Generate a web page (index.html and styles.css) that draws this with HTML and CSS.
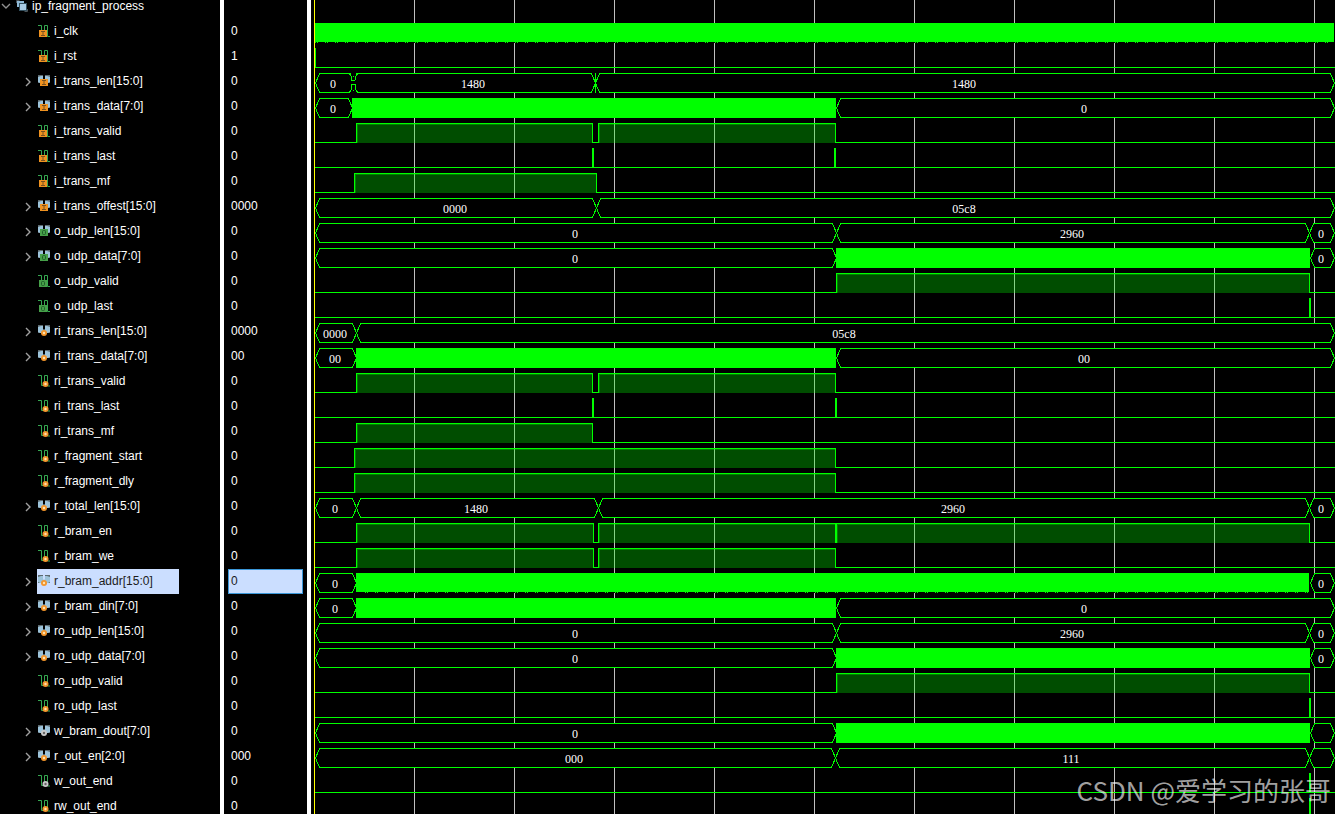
FILE: index.html
```html
<!DOCTYPE html>
<html lang="en">
<head>
<meta charset="utf-8">
<title>Waveform viewer</title>
<link rel="stylesheet" href="styles.css">
</head>
<body>
<svg class="symbols" aria-hidden="true">
  <defs>
    <symbol id="open" viewBox="0 0 10 10"><path d="M1 3l4 4 4-4" fill="none" stroke="#8f8f8f" stroke-width="1.4"/></symbol>
    <symbol id="closed" viewBox="0 0 10 10"><path d="M3 1l4 4-4 4" fill="none" stroke="#a0a0a0" stroke-width="1.4"/></symbol>
    <symbol id="scope" viewBox="0 0 12 12">
      <path d="M.5 3V.5h3M8.500 11.500h3V9" fill="none" stroke="#4b5257"/>
      <rect x="1" y="1" width="7" height="6" fill="#8fb9d6"/>
      <rect x="3.500" y="3.500" width="7" height="7" fill="#a9cbe4" stroke="#34505f"/>
    </symbol>
    <symbol id="pair" viewBox="0 0 12 12">
      <path d="M0 0h5v8H0zM7 0h5v8H7z" fill="#5d6a70"/>
      <path d="M0 2l3-1h2v3l1 1 1-1V1h2l3 1v5l-2 1H2L0 7z" fill="#9cc3da"/>
    </symbol>
    <symbol id="bit-in" viewBox="0 0 12 12">
      <path d="M0 .5h3.500V6M6.500 6V.5h3V11.500H12" fill="none" stroke="#35a850"/>
      <rect x="1" y="5" width="8" height="7" fill="#ef9220"/>
      <path d="M3 6.500h4M3 10.500h4M5 6.500v4" fill="none" stroke="#7a5220"/>
    </symbol>
    <symbol id="bit-out" viewBox="0 0 12 12">
      <path d="M0 .5h3.500V6M6.500 6V.5h3V11.500H12" fill="none" stroke="#35a850"/>
      <rect x="1" y="5" width="8" height="7" fill="#46a049"/>
      <rect x="3.500" y="6.500" width="3" height="4" rx="1" fill="none" stroke="#1f5c2a"/>
    </symbol>
    <symbol id="bit-reg" viewBox="0 0 12 12">
      <path d="M0 .5h3.500V10.500h3V.5h3V11H12" fill="none" stroke="#35a850"/>
      <circle cx="7.500" cy="9" r="3" fill="#f3952a"/><circle cx="7.500" cy="9" r="1.200" fill="#ffe2b0"/>
    </symbol>
    <symbol id="bit-wire" viewBox="0 0 12 12">
      <path d="M0 .5h3.500V10.500h3V.5h3V11H12" fill="none" stroke="#35a850"/>
      <circle cx="7.500" cy="9" r="3" fill="#c9c9c9"/><circle cx="7.500" cy="9" r="1.200" fill="#666"/>
    </symbol>
    <symbol id="bus-in" viewBox="0 0 12 12">
      <use href="#pair"/><rect x="2" y="4" width="8" height="7" fill="#ef9220"/>
      <path d="M4 5.500h4M4 9.500h4M6 5.500v4" fill="none" stroke="#7a5220"/>
    </symbol>
    <symbol id="bus-out" viewBox="0 0 12 12">
      <use href="#pair"/><rect x="2" y="4" width="8" height="7" fill="#46a049"/>
      <rect x="4.500" y="5.500" width="3" height="4" rx="1" fill="none" stroke="#1f5c2a"/>
    </symbol>
    <symbol id="bus-reg" viewBox="0 0 12 12">
      <use href="#pair"/><circle cx="6" cy="8" r="3" fill="#f3952a"/><circle cx="6" cy="8" r="1.200" fill="#ffe2b0"/>
    </symbol>
    <symbol id="bus-wire" viewBox="0 0 12 12">
      <use href="#pair"/><circle cx="6" cy="8" r="3" fill="#c9c9c9"/><circle cx="6" cy="8" r="1.200" fill="#666"/>
    </symbol>
  </defs>
</svg>
<main class="viewer">
  <ul class="names">
    <li class="scope"><button class="toggle" aria-label="Collapse ip_fragment_process"><svg><use href="#open"/></svg></button><svg class="icon"><use href="#scope"/></svg><span>ip_fragment_process</span></li>
    <li class="row"><span class="label"><svg class="icon"><use href="#bit-in"/></svg>i_clk</span></li>
    <li class="row"><span class="label"><svg class="icon"><use href="#bit-in"/></svg>i_rst</span></li>
    <li class="row"><button class="toggle" aria-label="Expand i_trans_len"><svg><use href="#closed"/></svg></button><span class="label"><svg class="icon"><use href="#bus-in"/></svg>i_trans_len[15:0]</span></li>
    <li class="row"><button class="toggle" aria-label="Expand i_trans_data"><svg><use href="#closed"/></svg></button><span class="label"><svg class="icon"><use href="#bus-in"/></svg>i_trans_data[7:0]</span></li>
    <li class="row"><span class="label"><svg class="icon"><use href="#bit-in"/></svg>i_trans_valid</span></li>
    <li class="row"><span class="label"><svg class="icon"><use href="#bit-in"/></svg>i_trans_last</span></li>
    <li class="row"><span class="label"><svg class="icon"><use href="#bit-in"/></svg>i_trans_mf</span></li>
    <li class="row"><button class="toggle" aria-label="Expand i_trans_offest"><svg><use href="#closed"/></svg></button><span class="label"><svg class="icon"><use href="#bus-in"/></svg>i_trans_offest[15:0]</span></li>
    <li class="row"><button class="toggle" aria-label="Expand o_udp_len"><svg><use href="#closed"/></svg></button><span class="label"><svg class="icon"><use href="#bus-out"/></svg>o_udp_len[15:0]</span></li>
    <li class="row"><button class="toggle" aria-label="Expand o_udp_data"><svg><use href="#closed"/></svg></button><span class="label"><svg class="icon"><use href="#bus-out"/></svg>o_udp_data[7:0]</span></li>
    <li class="row"><span class="label"><svg class="icon"><use href="#bit-out"/></svg>o_udp_valid</span></li>
    <li class="row"><span class="label"><svg class="icon"><use href="#bit-out"/></svg>o_udp_last</span></li>
    <li class="row"><button class="toggle" aria-label="Expand ri_trans_len"><svg><use href="#closed"/></svg></button><span class="label"><svg class="icon"><use href="#bus-reg"/></svg>ri_trans_len[15:0]</span></li>
    <li class="row"><button class="toggle" aria-label="Expand ri_trans_data"><svg><use href="#closed"/></svg></button><span class="label"><svg class="icon"><use href="#bus-reg"/></svg>ri_trans_data[7:0]</span></li>
    <li class="row"><span class="label"><svg class="icon"><use href="#bit-reg"/></svg>ri_trans_valid</span></li>
    <li class="row"><span class="label"><svg class="icon"><use href="#bit-reg"/></svg>ri_trans_last</span></li>
    <li class="row"><span class="label"><svg class="icon"><use href="#bit-reg"/></svg>ri_trans_mf</span></li>
    <li class="row"><span class="label"><svg class="icon"><use href="#bit-reg"/></svg>r_fragment_start</span></li>
    <li class="row"><span class="label"><svg class="icon"><use href="#bit-reg"/></svg>r_fragment_dly</span></li>
    <li class="row"><button class="toggle" aria-label="Expand r_total_len"><svg><use href="#closed"/></svg></button><span class="label"><svg class="icon"><use href="#bus-reg"/></svg>r_total_len[15:0]</span></li>
    <li class="row"><span class="label"><svg class="icon"><use href="#bit-reg"/></svg>r_bram_en</span></li>
    <li class="row"><span class="label"><svg class="icon"><use href="#bit-reg"/></svg>r_bram_we</span></li>
    <li class="row"><button class="toggle" aria-label="Expand r_bram_addr"><svg><use href="#closed"/></svg></button><span class="label selected"><svg class="icon"><use href="#bus-reg"/></svg>r_bram_addr[15:0]</span></li>
    <li class="row"><button class="toggle" aria-label="Expand r_bram_din"><svg><use href="#closed"/></svg></button><span class="label"><svg class="icon"><use href="#bus-reg"/></svg>r_bram_din[7:0]</span></li>
    <li class="row"><button class="toggle" aria-label="Expand ro_udp_len"><svg><use href="#closed"/></svg></button><span class="label"><svg class="icon"><use href="#bus-reg"/></svg>ro_udp_len[15:0]</span></li>
    <li class="row"><button class="toggle" aria-label="Expand ro_udp_data"><svg><use href="#closed"/></svg></button><span class="label"><svg class="icon"><use href="#bus-reg"/></svg>ro_udp_data[7:0]</span></li>
    <li class="row"><span class="label"><svg class="icon"><use href="#bit-reg"/></svg>ro_udp_valid</span></li>
    <li class="row"><span class="label"><svg class="icon"><use href="#bit-reg"/></svg>ro_udp_last</span></li>
    <li class="row"><button class="toggle" aria-label="Expand w_bram_dout"><svg><use href="#closed"/></svg></button><span class="label"><svg class="icon"><use href="#bus-wire"/></svg>w_bram_dout[7:0]</span></li>
    <li class="row"><button class="toggle" aria-label="Expand r_out_en"><svg><use href="#closed"/></svg></button><span class="label"><svg class="icon"><use href="#bus-reg"/></svg>r_out_en[2:0]</span></li>
    <li class="row"><span class="label"><svg class="icon"><use href="#bit-wire"/></svg>w_out_end</span></li>
    <li class="row"><span class="label"><svg class="icon"><use href="#bit-reg"/></svg>rw_out_end</span></li>
  </ul>
  <ul class="values">
    <li class="head"></li>
    <li>0</li><li>1</li><li>0</li><li>0</li><li>0</li><li>0</li><li>0</li><li>0000</li>
    <li>0</li><li>0</li><li>0</li><li>0</li><li>0000</li><li>00</li><li>0</li><li>0</li>
    <li>0</li><li>0</li><li>0</li><li>0</li><li>0</li><li>0</li><li class="selected">0</li><li>0</li>
    <li>0</li><li>0</li><li>0</li><li>0</li><li>0</li><li>000</li><li>0</li><li>0</li>
  </ul>
  <section class="waves" aria-label="Waveforms"><div class="lanes" id="lanes"></div></section>
</main>
<div class="watermark">CSDN @爱学习的张哥</div>
<script src="waves.js"></script>
</body>
</html>
```

FILE: styles.css
```css
* { box-sizing: border-box; }

body {
  margin: 0;
  height: 100vh;
  overflow: hidden;
  background: #000;
  color: #fff;
  font: 12px/24px "Liberation Sans", Arial, sans-serif;
}

.symbols { position: absolute; width: 0; height: 0; }

.viewer {
  display: grid;
  grid-template-columns: 224px 87px minmax(0, 1fr);
  height: 100%;
  overflow: hidden;
}

.names, .values {
  margin: 0;
  padding: 0;
  list-style: none;
  border-right: 4px solid #fff;
  white-space: nowrap;
}

.scope {
  display: flex;
  align-items: center;
  height: 19px;
  padding-bottom: 7px;
  line-height: 12px;
}
.scope .toggle { width: 12px; padding-left: 1px; }
.scope .icon { margin: 0 4px; }

.row {
  display: flex;
  justify-content: flex-start;
  height: 25px;
  padding-left: 23px;
}
.row .label:first-child { margin-left: 14px; }

.toggle {
  display: flex;
  align-items: center;
  width: 14px;
  padding: 0;
  border: 0;
  background: none;
}
.toggle svg { width: 10px; height: 10px; }

.icon { flex: none; width: 12px; height: 12px; }

.label {
  display: flex;
  align-items: center;
  gap: 4px;
  padding: 0 26px 1px 1px;
}

.values li {
  height: 25px;
  margin: 0 4px;
  padding-left: 3px;
}
.values .head { height: 19px; }

.selected { background: #cbdeff; color: #1c1c1c; }
.values .selected {
  padding-left: 2px;
  border: 1px solid #3b97d8;
  line-height: 22px;
}

.waves { padding-left: 3px; overflow: hidden; }
.lanes { min-height: 100%; border-left: 1px solid #ff0; }

.lane { display: block; width: 100%; height: 25px; }
.lane.head { height: 19px; }
.lane path, .lane rect { shape-rendering: crispEdges; }
.grid { fill: #c0c0c0; }
.trace { fill: none; stroke: #0f0; }
.solid { fill: #0f0; }
.blank { fill: #000; }
.high { fill: #0f0; fill-opacity: 0.3; }
.lane text {
  fill: #fff;
  font: 12px "Liberation Serif", "Times New Roman", serif;
  text-anchor: middle;
}

.watermark {
  position: absolute;
  right: 4px;
  bottom: 5px;
  color: rgba(255, 255, 255, 0.65);
  font: 400 26px/38px "Noto Sans CJK SC", sans-serif;
  white-space: nowrap;
}
```

FILE: waves.js
```js
// Time span shown by the viewer; every event below is in the same unit.
const SPAN = 1020;
const TOP = 4, BOTTOM = 23, MID = 13.5, SLANT = 4;

const bus = (from, to, text = "") => ({ kind: "bus", from, to, text });
const solid = (from, to) => ({ kind: "solid", from, to });
const dotted = (from, to) => ({ kind: "dotted", from, to });
const high = (from, to) => ({ kind: "high", from, to });
const pulse = (at, width = 2) => ({ kind: "pulse", at, width });
const glitch = at => ({ kind: "glitch", at });
const bit = (...parts) => ({ bit: true, parts });
const vec = (...parts) => ({ parts });

const lanes = [
  vec(dotted(0, 1019)),
  bit(pulse(0, 1)),
  vec(bus(0, 38, "0"), bus(38, 280, "1480"), bus(280, 1019, "1480"), glitch(38), pulse(280, 1)),
  vec(bus(0, 37, "0"), solid(37, 521), bus(521, 1019, "0")),
  bit(high(41, 277), high(283, 520)),
  bit(pulse(277), pulse(519)),
  bit(high(39, 281)),
  vec(bus(0, 281, "0000"), bus(281, 1019, "05c8")),
  vec(bus(0, 521, "0"), bus(521, 994, "2960"), bus(994, 1019, "0")),
  vec(bus(0, 521, "0"), solid(521, 995), bus(995, 1019, "0")),
  bit(high(521, 994)),
  bit(pulse(994)),
  vec(bus(0, 41, "0000"), bus(41, 1019, "05c8")),
  vec(bus(0, 41, "00"), solid(41, 521), bus(521, 1019, "00")),
  bit(high(41, 277), high(283, 520)),
  bit(pulse(277), pulse(520)),
  bit(high(41, 277)),
  bit(high(39, 520)),
  bit(high(39, 520)),
  vec(bus(0, 41, "0"), bus(41, 283, "1480"), bus(283, 994, "2960"), bus(994, 1019, "0")),
  bit(high(41, 278), high(283, 520), high(521, 994)),
  bit(high(41, 278), high(283, 520)),
  vec(bus(0, 41, "0"), dotted(41, 994), bus(995, 1019, "0")),
  vec(bus(0, 41, "0"), solid(41, 521), bus(521, 1019, "0")),
  vec(bus(0, 521, "0"), bus(521, 994, "2960"), bus(994, 1019, "0")),
  vec(bus(0, 521, "0"), solid(521, 995), bus(995, 1019, "0")),
  bit(high(521, 994)),
  bit(pulse(994)),
  vec(bus(0, 521, "0"), solid(521, 995), bus(995, 1019)),
  vec(bus(0, 520, "000"), bus(520, 994, "111"), bus(994, 1019)),
  bit(pulse(994)),
  bit(pulse(994))
];

const rect = (cls, x, y, w, h) =>
  `<rect class="${cls}" x="${x}" y="${y}" width="${w}" height="${h}"/>`;
const trace = d => `<path class="trace" d="${d}"/>`;

function draw() {
  const host = document.getElementById("lanes");
  const width = host.clientWidth;
  const px = t => Math.round(t * width / SPAN);

  const grid = height => {
    let out = "";
    for (let t = 99; t < SPAN; t += 100) out += rect("grid", px(t), 0, 1, height);
    return out;
  };

  const shapes = {
    bus(p) {
      const a = px(p.from) + 0.5, b = px(p.to) + 0.5, t = TOP + 0.5, l = BOTTOM + 0.5, m = MID + 0.5;
      const label = p.text
        ? `<text x="${Math.floor((a + b) / 2) - 1}" y="19">${p.text}</text>` : "";
      return trace(`M${a} ${m}L${a + SLANT} ${t}H${b - SLANT}L${b} ${m}L${b - SLANT} ${l}H${a + SLANT}Z`) + label;
    },
    solid: p => rect("solid", px(p.from), TOP, px(p.to) - px(p.from), 20),
    dotted(p) {
      const a = px(p.from), b = px(p.to);
      let dots = "";
      for (let x = Math.ceil(a / 10) * 10; x + 2 < b; x += 10) dots += `M${x} 23.5h1m1 0h1`;
      return rect("solid", a, TOP, b - a, 19) + trace(dots);
    },
    high(p) {
      const a = px(p.from), b = px(p.to);
      return rect("high", a, TOP, b - a, 20) +
        rect("high", a + 1, TOP + 1, b - a - 1, 1) +
        rect("high", a + 1, TOP + 2, 1, 18);
    },
    pulse: p => rect("solid", px(p.at), TOP, p.width, 20),
    glitch(p) {
      const x = px(p.at);
      return rect("blank", x - 3, TOP, 7, 20) +
        trace(`M${x - 2.5} 4.5L${x - 1} 11.5H${x + 2}L${x + 3.5} 4.500M${x - 2.5} 23.500L${x - 1} 15.500H${x + 2}L${x + 3.5} 23.500M${x} 7.500h1M${x} 21.500h1`);
    }
  };

  // Outline of a one-bit signal: low by default, raised over each high part.
  const outline = parts => {
    let d = "M0 23.5";
    for (const p of parts.filter(q => q.kind === "high")) {
      const a = px(p.from) + 0.5, b = px(p.to) + 0.5;
      d += `H${a}V4.500H${b}V23.500`;
    }
    return trace(d + `H${width}`);
  };

  const html = [`<svg class="lane head">${grid(19)}</svg>`];
  for (const lane of lanes) {
    let body = grid(25);
    if (!lane.bit) body += rect("blank", 0, TOP, width, 20);
    body += lane.parts.map(p => shapes[p.kind](p)).join("");
    if (lane.bit) body += outline(lane.parts);
    html.push(`<svg class="lane">${body}</svg>`);
  }
  host.innerHTML = html.join("");
}

draw();
window.addEventListener("resize", draw);
```
